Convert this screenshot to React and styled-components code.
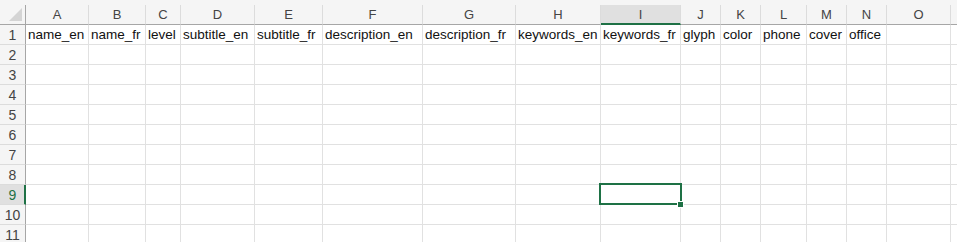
import React from "react";
import styled, { createGlobalStyle, css } from "styled-components";

const Global = createGlobalStyle`
  html, body { margin: 0; padding: 0; background: #ffffff; }
  body { font-family: "Liberation Sans", Arial, sans-serif; }
`;

const COLS = [
  { key: "A", w: 63 },
  { key: "B", w: 57 },
  { key: "C", w: 35 },
  { key: "D", w: 74 },
  { key: "E", w: 68 },
  { key: "F", w: 100 },
  { key: "G", w: 93 },
  { key: "H", w: 85 },
  { key: "I", w: 80 },
  { key: "J", w: 40 },
  { key: "K", w: 40 },
  { key: "L", w: 46 },
  { key: "M", w: 40 },
  { key: "N", w: 40 },
  { key: "O", w: 64 },
  { key: "", w: 40 },
];

const HEADERS = [
  "name_en", "name_fr", "level", "subtitle_en", "subtitle_fr",
  "description_en", "description_fr", "keywords_en", "keywords_fr",
  "glyph", "color", "phone", "cover", "office",
];

const SEL_COL = 8; // I
const SEL_ROW = 9;

const Frame = styled.div`
  width: 957px;
  height: 242px;
  overflow: hidden;
  background: #ffffff;
`;

const TopStrip = styled.div`
  height: 5px;
  background: #f5f5f5;
`;

const Grid = styled.div`
  display: grid;
  grid-template-columns: 26px ${COLS.map((c) => `${c.w}px`).join(" ")};
  grid-auto-rows: 20px;
  grid-template-rows: 20px;
  width: max-content;
`;

const Corner = styled.div`
  background: #f5f5f5;
  border-right: 1px solid #a6a6a6;
  border-bottom: 1px solid #a6a6a6;
  box-sizing: border-box;
  display: flex;
  align-items: flex-end;
  justify-content: flex-end;
  padding: 0 3px 3px 0;
`;

const ColHead = styled.div`
  box-sizing: border-box;
  background: ${(p) => (p.$active ? "#e0e0e0" : "#f5f5f5")};
  border-right: 1px solid #dcdcdc;
  border-bottom: ${(p) => (p.$active ? "2px solid #1e7145" : "1px solid #a6a6a6")};
  display: flex;
  align-items: center;
  justify-content: center;
  font-size: 13px;
  color: #444444;
  padding-top: ${(p) => (p.$active ? "1px" : "0")};
`;

const RowHead = styled.div`
  box-sizing: border-box;
  background: ${(p) => (p.$active ? "#e0e0e0" : "#f5f5f5")};
  border-right: ${(p) => (p.$active ? "2px solid #1e7145" : "1px solid #a6a6a6")};
  border-bottom: 1px solid #dcdcdc;
  display: flex;
  align-items: center;
  justify-content: center;
  font-size: 14px;
  color: ${(p) => (p.$active ? "#1e7145" : "#444444")};
  padding-left: ${(p) => (p.$active ? "1px" : "0")};
`;

const Cell = styled.div`
  position: relative;
  box-sizing: border-box;
  border-right: 1px solid #e1e1e1;
  border-bottom: 1px solid #e1e1e1;
  font-size: 13.5px;
  color: #111111;
  white-space: nowrap;
  overflow: visible;
  display: flex;
  align-items: flex-end;
  padding: 0 0 2px 2px;
  ${(p) =>
    p.$selected &&
    css`
      z-index: 2;
      &::after {
        content: "";
        position: absolute;
        left: -2px;
        top: -2px;
        right: -2px;
        bottom: -1px;
        border: 2px solid #1e7145;
      }
      &::before {
        content: "";
        position: absolute;
        right: -4px;
        bottom: -4px;
        width: 5px;
        height: 5px;
        background: #1e7145;
        border: 1px solid #ffffff;
        z-index: 3;
      }
    `}
`;

function CornerMark() {
  return (
    <svg width="13" height="13" viewBox="0 0 13 13">
      <polygon points="13,0 13,13 0,13" fill="#d4d4d4" />
    </svg>
  );
}

export default function App() {
  const rows = [];
  for (let r = 1; r <= 11; r++) {
    rows.push(
      <RowHead key={`rh${r}`} $active={r === SEL_ROW}>
        {r}
      </RowHead>
    );
    COLS.forEach((c, i) => {
      rows.push(
        <Cell key={`c${r}-${i}`} $selected={r === SEL_ROW && i === SEL_COL}>
          {r === 1 && HEADERS[i] ? HEADERS[i] : null}
        </Cell>
      );
    });
  }
  return (
    <>
      <Global />
      <Frame>
        <TopStrip />
        <Grid>
          <Corner>
            <CornerMark />
          </Corner>
          {COLS.map((c, i) => (
            <ColHead key={`h${i}`} $active={i === SEL_COL}>
              {c.key}
            </ColHead>
          ))}
          {rows}
        </Grid>
      </Frame>
    </>
  );
}
